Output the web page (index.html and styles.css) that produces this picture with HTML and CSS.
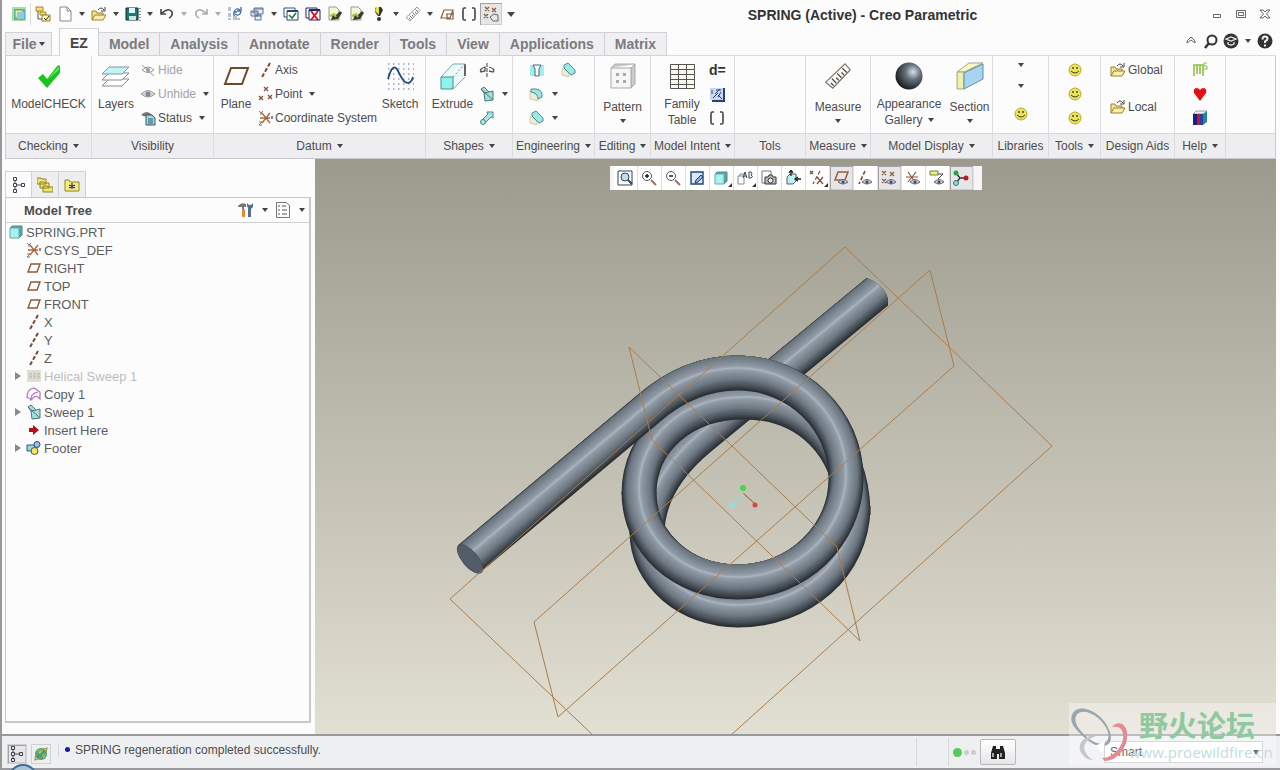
FILE: index.html
```
<!DOCTYPE html>
<html lang="en">
<head>
    <meta charset="UTF-8">
    <meta name="viewport" content="width=device-width, initial-scale=1.0">
    <title>SPRING (Active) - Creo Parametric</title>
    <link rel="stylesheet" href="styles.css">
</head>
<body>
    <!-- Shared icons -->
    <svg class="sprite" aria-hidden="true">
        <symbol id="i-plane" viewBox="0 0 16 16"><path d="M5 4h9l-3 8H2z" fill="none" stroke="#8a5a38" stroke-width="1.4"/></symbol>
        <symbol id="i-axis" viewBox="0 0 16 16"><path d="M12 1L4 15" fill="none" stroke="#7a4c30" stroke-width="2" stroke-dasharray="4 2"/></symbol>
        <symbol id="i-csys" viewBox="0 0 16 16"><path d="M2 8h10M4 3l8 10M12 3L4 13" stroke="#a5663a" stroke-width="1.3"/><path d="M1 1l2 2 2-2M3 3v2M13 6l2 3M15 6l-2 3M1 12h3l-3 3h3" fill="none" stroke="#555" stroke-width=".8"/></symbol>
        <symbol id="i-points" viewBox="0 0 16 16"><path d="M6 1l4 4M10 1L6 5M1 10l4 4M5 10l-4 4M10 9l4 4M14 9l-4 4" stroke="#8a5038" stroke-width="1.3"/></symbol>
        <symbol id="i-sweep" viewBox="0 0 16 16"><path d="M2 3l3-2 5 5 4-1v9l-8 1-1-8z" fill="#a9dcdc" stroke="#447878"/><path d="M2 3l12 11M5 7l5-1" stroke="#447878" fill="none"/></symbol>
        <symbol id="i-open" viewBox="0 0 16 16"><path d="M1 14V5h4l1 2h6v3" fill="#f4e08a" stroke="#9a8132"/><path d="M1 14l3-5h11l-3 5z" fill="#fbeeaa" stroke="#9a8132"/><path d="M7 4q3-4 6 0M14 1v4h-4" fill="none" stroke="#444"/></symbol>
        <symbol id="i-smile" viewBox="0 0 16 16"><circle cx="8" cy="8" r="6" fill="#ece458" stroke="#b5a93a"/><path d="M6 5v2M10 5v2" stroke="#443f10" stroke-width="1.4"/><path d="M4 9q4 4 8 0" fill="none" stroke="#443f10"/></symbol>
        <symbol id="i-round" viewBox="0 0 16 16"><path d="M1 5v8l8 2V9z" fill="#f2e9d2" stroke="#c9bc9a" stroke-width=".7"/><path d="M2 3h5q7 1 6 8l-4 2q0-6-7-7z" fill="#9ce8e4" stroke="#4c8c8c"/></symbol>
        <symbol id="i-chamfer" viewBox="0 0 16 16"><path d="M1 6v7l7 2v-4z" fill="#f2e9d2" stroke="#c9bc9a" stroke-width=".7"/><path d="M3 3l4-2 7 7v3l-4 2-7-7z" fill="#9ce8e4" stroke="#4c8c8c"/></symbol>
        <symbol id="i-tree" viewBox="0 0 16 16"><path d="M2.500 .500h3v3h-3zM2.500 6.500h3v3h-3zM2.500 12.500h3v3h-3zM10.500 6.500h3v3h-3zM4 3.500v3M4 9.500v3M5.500 8h5" fill="none" stroke="#3c4454"/></symbol>
        <symbol id="i-eye" viewBox="0 0 16 16"><path d="M1 8q7-7 14 0q-7 6-14 0z" fill="#d4d6d8" stroke="#999"/><circle cx="8" cy="8" r="2.500" fill="#888"/></symbol>
        <symbol id="i-ruler" viewBox="0 0 32 32"><path d="M2 23L24 2l6 7L10 30z" fill="#f8f6ee" stroke="#776f66" stroke-width="1.300"/><path d="M11 27l-3-3M14 24l-5-5M17 21l-3-3M20 18l-5-5M23 15l-3-3M26 12l-5-5" stroke="#444" stroke-width="1.4"/></symbol>
        <symbol id="i-edit" viewBox="0 0 16 16"><path d="M2 1h7l3 3v10H2z" fill="#f4f6d4" stroke="#999"/><path d="M4 14l2-6 3 1 4-4 2 2-4 6z" fill="#3a3d30"/><path d="M3 10l4-2 2 3" stroke="#b4c04a" stroke-width="2" fill="none"/></symbol>
        <symbol id="i-cube" viewBox="0 0 16 16"><path d="M2 4l2-2h10v9l-3 3" fill="#4fa8aa" stroke="#5a8888"/><path d="M2 4h9v10H2z" fill="#a6f3ef" stroke="#6aa"/></symbol>
        <symbol id="i-brackets" viewBox="0 0 16 16"><path d="M5 2H3Q2 2 2 4v8q0 2 1 2h2M11 2h2q1 0 1 2v8q0 2-1 2h-2" fill="none" stroke="#444" stroke-width="1.6"/></symbol>
    </svg>

    <div class="app">
        <header class="titlebar">
            <div class="quick">
                <button aria-label="Creo"><svg viewBox="0 0 16 16"><path d="M1 1h14v14H1z" fill="#a7dfa0"/><path d="M3 3h11v11H3z" fill="#56b5c0"/><path d="M4 4h8v8H4z" fill="#e9ec92" stroke="#61a86c"/><path d="M6 6h7v7H6z" fill="#8fc9dd"/></svg></button>
                <span class="sep"></span>
                <button aria-label="Model tree"><svg viewBox="0 0 16 16"><path d="M1 1h7v4H1zM5 6h6v3H5z" fill="#f4df70" stroke="#a48a28"/><path d="M3 5v8h4" fill="none" stroke="#555"/><path d="M7 9h8v6H7z" fill="#fff4a8" stroke="#8f7a2a"/><path d="M9 12l2 2 3-4" fill="none" stroke="#333"/></svg></button>
                <button aria-label="New"><svg viewBox="0 0 16 16"><path d="M3 1h7l4 4v10H3zM10 1v4h4" fill="#fff" stroke="#888"/></svg></button>
                <button class="drop" aria-label="New options"></button>
                <button aria-label="Open"><svg><use href="#i-open"/></svg></button>
                <button class="drop" aria-label="Open options"></button>
                <button aria-label="Save"><svg viewBox="0 0 16 16"><path d="M1 2h12v12H1z" fill="#1d7a78" stroke="#123"/><path d="M4 2h6v5H4z" fill="#e8f6f4"/><path d="M4 10h7v4H4z" fill="#cfe6e2"/><path d="M15 2v13" stroke="#333" stroke-dasharray="1 2"/></svg></button>
                <button class="drop" aria-label="Save options"></button>
                <button aria-label="Undo"><svg viewBox="0 0 16 16"><path d="M3 7q7-6 10-1q1 4-3 6M2 3v5h5" fill="none" stroke="#444" stroke-width="1.600"/></svg></button>
                <button class="drop off" aria-label="Undo options"></button>
                <button aria-label="Redo"><svg viewBox="0 0 16 16"><path d="M13 7q-7-6-10-1q-1 4 3 6M14 3v5H9" fill="none" stroke="#aaa" stroke-width="1.600"/></svg></button>
                <button class="drop off" aria-label="Redo options"></button>
                <button aria-label="Regenerate"><svg viewBox="0 0 16 16"><path d="M1 2h3M1 4h3M1 8h3M1 10h3M1 13h3M6 13h7M6 11h4" stroke="#789" stroke-width="1.200"/><path d="M7 6q2-5 6-2M14 1v4h-4M14 6q-2 5-6 2M7 10V6h3" fill="none" stroke="#3a6ea8" stroke-width="1.300"/></svg></button>
                <button aria-label="Windows"><svg viewBox="0 0 16 16"><path d="M5 2h9v6H5zM2 5h7v5H2zM6 9h6v5H6z" fill="#e8f0fa" stroke="#5b7396"/><path d="M5 3h9M2 6h7M6 10h6" stroke="#5b7396"/></svg></button>
                <button class="drop" aria-label="Window options"></button>
                <button aria-label="Activate"><svg viewBox="0 0 16 16"><path d="M1 2h11v9H1z" fill="#fff" stroke="#356"/><path d="M4 5h11v9H4z" fill="#fff" stroke="#27466c"/><path d="M4 5h11" stroke="#27466c" stroke-width="2"/><path d="M6 9l3 3 4-5" fill="none" stroke="#1f7a3d" stroke-width="1.600"/></svg></button>
                <button aria-label="Close window"><svg viewBox="0 0 16 16"><path d="M1 2h11v10H1z" fill="#fff" stroke="#24246a"/><path d="M4 4h11v10H4z" fill="#fff" stroke="#24246a"/><path d="M4 4h11" stroke="#24246a" stroke-width="2"/><path d="M6 5l7 9M13 5l-7 9" stroke="#d9151f" stroke-width="2"/></svg></button>
                <button aria-label="Edit sketch"><svg><use href="#i-edit"/></svg></button>
                <button aria-label="Edit dimensions"><svg><use href="#i-edit"/></svg></button>
                <button aria-label="Alert"><svg viewBox="0 0 16 16"><path d="M5 1h5l2 3-3 6H7L4 6V3z" fill="#333"/><path d="M5 1h3v8L4 5z" fill="#e6e52a"/><circle cx="8" cy="13" r="2" fill="#333"/></svg></button>
                <button class="drop" aria-label="Alert options"></button>
                <button aria-label="Measure"><svg><use href="#i-ruler"/></svg></button>
                <button class="drop" aria-label="Measure options"></button>
                <button aria-label="Sketch plane"><svg viewBox="0 0 16 16"><path d="M5 4h9l-3 8H2zM7 8h8M8 8v5h6V5" fill="none" stroke="#8a5a48" stroke-width="1.200"/></svg></button>
                <button aria-label="Parameters"><svg><use href="#i-brackets"/></svg></button>
                <button class="pressed" aria-label="Point display"><svg viewBox="0 0 16 16"><path d="M2 1l4 4M6 1L2 5M9 2l4 4M13 2L9 6M1 8l4 4M5 8l-4 4" stroke="#87603c" stroke-width="1.300"/><path d="M7 11l4-3 4 1v6h-5z" fill="#e6e6e6" stroke="#666"/></svg></button>
                <button class="drop customize" aria-label="Customize toolbar"></button>
            </div>
            <h1>SPRING (Active) - Creo Parametric</h1>
            <div class="window-buttons">
                <button aria-label="Minimize"><svg viewBox="0 0 16 16"><path d="M4.500 8.500h7v3h-7z" fill="none" stroke="#666"/></svg></button>
                <button aria-label="Restore"><svg viewBox="0 0 16 16"><path d="M3.500 4.500h9v7h-9zM5.500 6.500h5v3h-5z" fill="none" stroke="#666"/></svg></button>
                <button aria-label="Close"><svg viewBox="0 0 16 16"><path d="M3 4h3l2 2 2-2h3L9.500 8l3.500 4h-3l-2-2-2 2H3l3.500-4z" fill="#fff" stroke="#666"/></svg></button>
            </div>
        </header>

        <nav class="tabs">
            <button class="tab file">File<i class="caret"></i></button>
            <button class="tab active">EZ</button>
            <button class="tab">Model</button>
            <button class="tab">Analysis</button>
            <button class="tab">Annotate</button>
            <button class="tab">Render</button>
            <button class="tab">Tools</button>
            <button class="tab">View</button>
            <button class="tab">Applications</button>
            <button class="tab">Matrix</button>
            <div class="help-buttons">
                <button aria-label="Collapse ribbon"><svg viewBox="0 0 16 16"><path d="M4 8l4-4 4 4v2L8 7l-4 3z" fill="none" stroke="#666"/></svg></button>
                <button aria-label="Search"><svg viewBox="0 0 16 16"><circle cx="9" cy="7" r="4.500" fill="none" stroke="#333" stroke-width="2"/><path d="M6 10l-4 5" stroke="#333" stroke-width="2.500"/></svg></button>
                <button class="learn" aria-label="Learning"><svg viewBox="0 0 16 16"><circle cx="8" cy="8" r="7.500" fill="#333"/><path d="M3 6l5-2 5 2-5 2zM5 9v2q3 2 6 0V9" fill="none" stroke="#eee" stroke-width="1.300"/></svg></button>
                <button class="drop" aria-label="Learning options"></button>
                <button aria-label="Help"><svg viewBox="0 0 16 16"><circle cx="8" cy="8" r="7.500" fill="#333"/><path d="M5.500 6.500q0-3 2.500-3t2.500 2.300q0 1.400-2.500 2.700v1.500" fill="none" stroke="#eee" stroke-width="2"/><path d="M7 11.500h2v2H7z" fill="#eee"/></svg></button>
            </div>
        </nav>

        <section class="ribbon">
            <div class="group checking">
                <div class="group-body">
                    <button class="big"><svg viewBox="0 0 28 28"><path d="M3 16l5-4 4 5L23 3l2 1v7L12 26z" fill="#19c41f"/><path d="M12 18L24 4v4z" fill="#5ce45a"/></svg>ModelCHECK</button>
                </div>
                <button class="group-name">Checking<i class="caret"></i></button>
            </div>
            <div class="group visibility">
                <div class="group-body">
                    <button class="big layers"><svg viewBox="0 0 28 28"><path d="M7 17h20l-7 7H0z" fill="#fff" stroke="#8b8b8b"/><path d="M7 11h20l-7 7H0z" fill="#fff" stroke="#8b8b8b"/><path d="M7 5h20l-7 7H0z" fill="#c4f4f6" stroke="#7a9ca0"/></svg>Layers</button>
                    <div class="stack">
                        <button class="small" disabled><svg viewBox="0 0 16 16"><path d="M2 8q6-6 12 0q-6 5-12 0zM2 3l12 11" fill="none" stroke="#999"/><circle cx="8" cy="8" r="2" fill="#999"/></svg>Hide</button>
                        <button class="small" disabled><svg><use href="#i-eye"/></svg>Unhide<i class="caret"></i></button>
                        <button class="small"><svg viewBox="0 0 16 16"><path d="M1 5q6-6 11 0q-5 3-11 0z" fill="#777"/><path d="M6 5h6l3 3v7H6z" fill="#9fdede" stroke="#356"/><path d="M8 9h5M8 11h5M8 13h5" stroke="#356"/></svg>Status<i class="caret"></i></button>
                    </div>
                </div>
                <div class="group-name">Visibility</div>
            </div>
            <div class="group datum">
                <div class="group-body">
                    <button class="big plane"><svg viewBox="0 0 28 28"><path d="M9 6h17l-6 16H3z" fill="none" stroke="#6a4a28" stroke-width="2"/></svg>Plane</button>
                    <div class="stack wide">
                        <button class="small"><svg><use href="#i-axis"/></svg>Axis</button>
                        <button class="small"><svg><use href="#i-points"/></svg>Point<i class="caret"></i></button>
                        <button class="small"><svg><use href="#i-csys"/></svg>Coordinate System</button>
                    </div>
                    <button class="big sketch"><svg viewBox="0 0 28 28"><path d="M2 2h26M2 7h26M2 12h26M2 17h26M2 22h26M2 27h26" stroke="#8d9fc4" stroke-width="1.500" stroke-dasharray="1.500 3.500"/><path d="M2 17Q7-1 12 9t7 11q6 3 8-5" fill="none" stroke="#2b4a78" stroke-width="1.800"/></svg>Sketch</button>
                </div>
                <button class="group-name">Datum<i class="caret"></i></button>
            </div>
            <div class="group shapes">
                <div class="group-body">
                    <button class="big extrude"><svg viewBox="0 0 28 28"><path d="M2 15L14 2h12v12L14 27z" fill="#eefafa"/><path d="M2 15L14 2h12M14 27l12-12" fill="none" stroke="#7aa"/><path d="M26 2v12" stroke="#333" stroke-width="1.500"/><path d="M14 15L26 2" stroke="#789" stroke-dasharray="2 2"/><path d="M2 15h12v12H2z" fill="#8df3ee" stroke="#4a8c8c"/></svg>Extrude</button>
                    <div class="stack">
                        <button class="small" aria-label="Revolve"><svg viewBox="0 0 16 16"><path d="M8 1v14" stroke="#444" stroke-dasharray="4 1"/><path d="M6 5Q0 7 2 10l4-1zM10 5q7 2 4 5l-4-1" fill="none" stroke="#555" stroke-width="1.300"/></svg></button>
                        <button class="small" aria-label="Sweep"><svg><use href="#i-sweep"/></svg><i class="caret"></i></button>
                        <button class="small" aria-label="Swept blend"><svg viewBox="0 0 16 16"><path d="M3 10l6-6-1-2h6v6l-2-1-6 6z" fill="#a9e8e8" stroke="#4a8484"/><circle cx="4" cy="12" r="2.500" fill="#a9e8e8" stroke="#4a8484"/></svg></button>
                    </div>
                </div>
                <button class="group-name">Shapes<i class="caret"></i></button>
            </div>
            <div class="group engineering">
                <div class="group-body">
                    <div class="stack">
                        <button class="small" aria-label="Hole"><svg viewBox="0 0 16 16"><path d="M1 3h14v11H1z" fill="#a2eeec"/><path d="M4 3h8l-2 4v7H6V7z" fill="#fff" stroke="#467"/></svg></button>
                        <button class="small" aria-label="Round"><svg><use href="#i-round"/></svg><i class="caret"></i></button>
                        <button class="small" aria-label="Chamfer"><svg><use href="#i-chamfer"/></svg><i class="caret"></i></button>
                    </div>
                    <div class="stack">
                        <button class="small" aria-label="Draft"><svg><use href="#i-chamfer"/></svg></button>
                    </div>
                </div>
                <button class="group-name">Engineering<i class="caret"></i></button>
            </div>
            <div class="group editing">
                <div class="group-body">
                    <button class="big menu"><svg viewBox="0 0 28 28"><path d="M2 6l4-4h20l-4 4v20l4-4V2" fill="#ccc" stroke="#aaa"/><path d="M2 6h20v20H2z" fill="#f6f6f6" stroke="#aaa"/><path d="M7 11h3v3H7zM14 11h3v3h-3zM7 18h3v3H7zM14 18h3v3h-3z" fill="#aaa"/></svg>Pattern<i class="caret"></i></button>
                </div>
                <button class="group-name">Editing<i class="caret"></i></button>
            </div>
            <div class="group intent">
                <div class="group-body">
                    <button class="big family"><svg viewBox="0 0 28 28"><path d="M2.500 2.500h24v24h-24zM2.500 7.500h24M2.500 12.500h24M2.500 17.500h24M2.500 22.500h24M10.500 2.500v24M18.500 2.500v24" fill="#fbf8ee" stroke="#555"/></svg>Family<br>Table</button>
                    <div class="stack">
                        <button class="small relations">d=</button>
                        <button class="small" aria-label="Publish geometry"><svg viewBox="0 0 16 16"><path d="M1 2h13v12H1z" fill="#c9d8ee"/><path d="M15 2v13H3" fill="none" stroke="#24427c" stroke-width="2"/><path d="M3 4v4M6 8l5-5M7 4h5M4 12l5-5M9 9l4 4M12 6l-3 5" stroke="#24427c"/></svg></button>
                        <button class="small" aria-label="Parameters"><svg><use href="#i-brackets"/></svg></button>
                    </div>
                </div>
                <button class="group-name">Model Intent<i class="caret"></i></button>
            </div>
            <div class="group tols">
                <div class="group-body"></div>
                <div class="group-name">Tols</div>
            </div>
            <div class="group measure">
                <div class="group-body">
                    <button class="big menu"><svg><use href="#i-ruler"/></svg>Measure<i class="caret"></i></button>
                </div>
                <button class="group-name">Measure<i class="caret"></i></button>
            </div>
            <div class="group display">
                <div class="group-body">
                    <button class="big appearance"><svg viewBox="0 0 28 28"><defs><radialGradient id="ball" cx=".65" cy=".35" r=".7"><stop offset="0" stop-color="#d7e2ea"/><stop offset=".4" stop-color="#66727c"/><stop offset="1" stop-color="#15181b"/></radialGradient></defs><circle cx="14" cy="14" r="13.500" fill="url(#ball)"/></svg><span>Appearance<br>Gallery<i class="caret"></i></span></button>
                    <button class="big menu section"><svg viewBox="0 0 28 28"><path d="M1 10L13 1h14L8 10z" fill="#fbf7c4" stroke="#aaa47a"/><path d="M1 10h7v17H1z" fill="#f0efb0" stroke="#aaa47a"/><path d="M8 11L27 2v15L8 27z" fill="#a8d4ef" stroke="#5e8fac"/></svg>Section<i class="caret"></i></button>
                </div>
                <button class="group-name">Model Display<i class="caret"></i></button>
            </div>
            <div class="group libraries">
                <div class="group-body">
                    <div class="stack center">
                        <button class="small tight" aria-label="Library 1"><i class="caret"></i></button>
                        <button class="small" aria-label="Library 2"><i class="caret"></i></button>
                        <button class="small" aria-label="Library 3"><svg><use href="#i-smile"/></svg></button>
                    </div>
                </div>
                <div class="group-name">Libraries</div>
            </div>
            <div class="group tools">
                <div class="group-body">
                    <div class="stack center">
                        <button class="small" aria-label="Tool 1"><svg><use href="#i-smile"/></svg></button>
                        <button class="small" aria-label="Tool 2"><svg><use href="#i-smile"/></svg></button>
                        <button class="small" aria-label="Tool 3"><svg><use href="#i-smile"/></svg></button>
                    </div>
                </div>
                <button class="group-name">Tools<i class="caret"></i></button>
            </div>
            <div class="group aids">
                <div class="group-body">
                    <div class="stack spread">
                        <button class="small"><svg><use href="#i-open"/></svg>Global</button>
                        <button class="small"><svg><use href="#i-open"/></svg>Local</button>
                    </div>
                </div>
                <div class="group-name">Design Aids</div>
            </div>
            <div class="group help">
                <div class="group-body">
                    <div class="stack center">
                        <button class="small" aria-label="Model help"><svg viewBox="0 0 16 16"><path d="M2 14V3h9v11M5 3v9M8 3v9" fill="none" stroke="#8fbd4a" stroke-width="1.600"/><path d="M15 1h-3v3h3v3h-3" fill="none" stroke="#8fbd4a"/></svg></button>
                        <button class="small" aria-label="Favourites"><svg viewBox="0 0 16 16"><path d="M8 15L2 7q-1-4 2-5 3 0 4 2 1-2 4-2 3 1 2 5z" fill="#e50f12"/></svg></button>
                        <button class="small" aria-label="Books"><svg viewBox="0 0 16 16"><path d="M1 4l3-3h11l-3 3z" fill="#eee" stroke="#667" stroke-width=".6"/><path d="M1 4h4v11H1z" fill="#1c1c86"/><path d="M5 4h3v11H5z" fill="#c01825"/><path d="M8 4h3v11H8z" fill="#2a3fa0"/><path d="M11 4l4-3v11l-4 3z" fill="#1f8a8a"/></svg></button>
                    </div>
                </div>
                <button class="group-name">Help<i class="caret"></i></button>
            </div>
            <div class="group rest">
                <div class="group-body"></div>
                <div class="group-name"></div>
            </div>
        </section>

        <main class="work">
            <aside class="navigator">
                <div class="nav-tabs">
                    <button class="active" aria-label="Model tree"><svg><use href="#i-tree"/></svg></button>
                    <button aria-label="Folder browser"><svg viewBox="0 0 16 16"><path d="M0 1h4l1 1h4v5H0zM3 5h4l1 1h4v5H3zM6 9h4l1 1h5v5H6z" fill="#f2e667" stroke="#8c8232"/></svg></button>
                    <button aria-label="Favorites"><svg viewBox="0 0 16 16"><path d="M1 3h4l1 2h9v9H1z" fill="#f6ec76" stroke="#8c8232"/><path d="M8 6v6M5 8l6 3M11 8l-6 3" stroke="#2b2f9c" stroke-width="1.300"/></svg></button>
                </div>
                <div class="tree">
                    <div class="tree-head">
                        <h2>Model Tree</h2>
                        <button aria-label="Settings"><svg viewBox="0 0 16 16"><path d="M0 4q3-4 8-2v3H6v10H4V5H0z" fill="#777"/><path d="M4 7h3v8H4z" fill="#e08a3a"/><path d="M9 1l2 2h2l2-2v4l-2 2v8h-3V6L9 4z" fill="#4f6f94"/></svg></button>
                        <button class="drop" aria-label="Settings options"></button>
                        <button aria-label="Show"><svg viewBox="0 0 16 16"><path d="M1.500.500h10l3 3v12h-13z" fill="#fafafa" stroke="#777"/><path d="M3 4h2M7 4h4M3 8h2M7 8h5M3 12h2M7 12h5" stroke="#555"/></svg></button>
                        <button class="drop" aria-label="Show options"></button>
                    </div>
                    <ul>
                        <li class="root"><svg><use href="#i-cube"/></svg>SPRING.PRT</li>
                        <li><i></i><svg><use href="#i-csys"/></svg>CSYS_DEF</li>
                        <li><i></i><svg><use href="#i-plane"/></svg>RIGHT</li>
                        <li><i></i><svg><use href="#i-plane"/></svg>TOP</li>
                        <li><i></i><svg><use href="#i-plane"/></svg>FRONT</li>
                        <li><i></i><svg><use href="#i-axis"/></svg>X</li>
                        <li><i></i><svg><use href="#i-axis"/></svg>Y</li>
                        <li><i></i><svg><use href="#i-axis"/></svg>Z</li>
                        <li class="suppressed"><i class="expand"></i><svg viewBox="0 0 16 16"><path d="M1 2h14v12H1z" fill="#deded4"/><path d="M3 5l3 1-3 2 3 1-3 2M7 5l3 1-3 2 3 1-3 2M11 5l3 1-3 2 3 1-3 2" fill="none" stroke="#bfbfb2"/></svg>Helical Sweep 1</li>
                        <li><i></i><svg viewBox="0 0 16 16"><path d="M1 12Q1 3 8 2l6 4v7q-3-4-6-2l-3 3q-1-6 7-8M1 12q2-1 4 2" fill="none" stroke="#b072c4" stroke-width="1.200"/></svg>Copy 1</li>
                        <li><i class="expand"></i><svg><use href="#i-sweep"/></svg>Sweep 1</li>
                        <li><i></i><svg viewBox="0 0 16 16"><path d="M3 6h4V3l6 5-6 5v-3H3z" fill="#b4101c"/></svg>Insert Here</li>
                        <li><i class="expand"></i><svg viewBox="0 0 16 16"><path d="M1 5h8v6H1z" fill="#8fdede" stroke="#356"/><circle cx="11" cy="4.500" r="3" fill="#9fc0ee" stroke="#346"/><circle cx="8.500" cy="11" r="3.500" fill="#f2e667" stroke="#554"/></svg>Footer</li>
                    </ul>
                </div>
            </aside>

            <div class="viewport">
                <svg class="scene" viewBox="315 159 961 575" preserveAspectRatio="xMidYMid slice">
                    <defs>
                        <path id="rod" d="M900 273L700 438C665 467 647 500 647 534"/>
                        <path id="coil-mid" d="M853 515C853 445 806 402 744 402C684 402 639 440 639 494"/>
                        <path id="coil-low" d="M647 532C647 575 688 610 738 610C802 610 853 566 853 506"/>
                        <path id="coil-front" d="M639 492C639 543 682 582 738 582C797 582 846 536 846 478C846 420 797 373 738 373C702 373 672 388 648 409L469 559"/>
                        <clipPath id="rod-end"><path d="M600 230L866 278C878 282 888 292 888 302V660H600Z"/></clipPath>
                    </defs>
                    <!-- tubes, far to near -->
                    <g clip-path="url(#rod-end)"><g class="tube" data-path="rod"></g></g>
                    <g class="tube" data-path="coil-mid"></g>
                    <g class="tube" data-path="coil-low"></g>
                    <g class="tube" data-path="coil-front"></g>
                    <ellipse cx="470" cy="559" rx="17.500" ry="7.500" transform="rotate(50 470 559)" fill="#535d67" stroke="#48515a"/>
                    <!-- datum planes -->
                    <g class="datums">
                        <path d="M845 247L1052 446L660 799L450 599Z"/>
                        <path d="M930 270L954 366L558 717L534 622Z"/>
                        <path d="M629 347L837 547L860 641L652 440Z"/>
                    </g>
                    <!-- spin centre -->
                    <path d="M743 493L755 504" stroke="#a33f3f"/>
                    <path d="M743 495L732 506" stroke="#a8d4ce" stroke-width="2"/>
                    <path d="M743 489v12" stroke="#a8d8b0"/>
                    <circle cx="743" cy="488" r="3" fill="#4cd24c"/>
                    <circle cx="755" cy="505" r="2.500" fill="#d94444"/>
                    <circle cx="732" cy="505" r="3" fill="#9bd9d6"/>
                </svg>

                <div class="view-tools">
                    <button aria-label="Refit"><svg viewBox="0 0 16 16"><path d="M1 1h14v14H1z" fill="#fff" stroke="#345"/><circle cx="8" cy="7" r="4" fill="#c4dcf2" stroke="#345"/><path d="M11 10l4 4" stroke="#345" stroke-width="2"/></svg></button>
                    <button aria-label="Zoom in"><svg viewBox="0 0 16 16"><circle cx="6" cy="6" r="4.500" fill="#fff" stroke="#555"/><path d="M4 6h4M6 4v4" stroke="#222" stroke-width="1.500"/><path d="M10 10l5 5" stroke="#a07060" stroke-width="2"/></svg></button>
                    <button aria-label="Zoom out"><svg viewBox="0 0 16 16"><circle cx="6" cy="6" r="4.500" fill="#fff" stroke="#555"/><path d="M4 6h4" stroke="#222" stroke-width="1.500"/><path d="M10 10l5 5" stroke="#a07060" stroke-width="2"/></svg></button>
                    <button aria-label="Repaint"><svg viewBox="0 0 16 16"><path d="M2 2h12v12H2z" fill="#d6e9fa" stroke="#24446c" stroke-width="1.400"/><path d="M12 5l-5 5-1 3 3-1 5-5z" fill="#8fb0da" stroke="#24446c"/></svg></button>
                    <button class="more" aria-label="Display style"><svg><use href="#i-cube"/></svg></button>
                    <button class="more" aria-label="Saved views"><svg viewBox="0 0 16 16"><path d="M1 6h6v8H1zM3 6V4h4" fill="#fff" stroke="#888"/><path d="M6 8l2-6 2 6M7 6h2M12 2v6h2q3-2 0-3 2-2 0-3z" fill="none" stroke="#345"/></svg></button>
                    <button aria-label="View manager"><svg viewBox="0 0 16 16"><path d="M1 1h9v12H1z" fill="#fff" stroke="#777"/><path d="M4 7h3l1-2h3l1 2h3v7H4z" fill="#bbb" stroke="#333"/><circle cx="9.500" cy="10.500" r="2.500" fill="#eee" stroke="#333"/></svg></button>
                    <button aria-label="Perspective"><svg viewBox="0 0 16 16"><path d="M2 7l3-3h6v7l-3 3H2z" fill="#bfeef0" stroke="#466"/><path d="M6 0v6M4 3l2-3 2 3M16 9h-5M13 7l-3 2 3 2" fill="none" stroke="#222" stroke-width="1.300"/></svg></button>
                    <button class="more" aria-label="Datum filters"><svg viewBox="0 0 16 16"><path d="M1 1l3 3M4 1L1 4M8 7l6 7M14 7l-6 7" stroke="#7a5236" stroke-width="1.300"/><path d="M11 1L4 14" stroke="#7a5236" stroke-width="1.300" stroke-dasharray="4 2"/></svg></button>
                    <button class="pressed" aria-label="Plane display"><svg viewBox="0 0 16 16"><path d="M5 2h10l-3 8H2z" fill="none" stroke="#9a6038" stroke-width="1.500"/><path d="M5 12q5-5 10 0q-5 4-10 0z" fill="#c4ccd2" stroke="#667"/><circle cx="10" cy="12" r="1.500" fill="#445"/></svg></button>
                    <button aria-label="Axis display"><svg viewBox="0 0 16 16"><path d="M8 1L2 14" stroke="#7a4c30" stroke-width="1.600" stroke-dasharray="4 2"/><path d="M5 12q5-5 10 0q-5 4-10 0z" fill="#c4ccd2" stroke="#667"/><circle cx="10" cy="12" r="1.500" fill="#445"/></svg></button>
                    <button class="pressed" aria-label="Point display"><svg viewBox="0 0 16 16"><path d="M1 1l4 4M5 1L1 5M9 2l4 4M13 2L9 6M1 9l4 4M5 9l-4 4" stroke="#87603c" stroke-width="1.300"/><path d="M5 12q5-5 10 0q-5 4-10 0z" fill="#c4ccd2" stroke="#667"/><circle cx="10" cy="12" r="1.500" fill="#445"/></svg></button>
                    <button aria-label="Csys display"><svg viewBox="0 0 16 16"><path d="M1 7h12M3 2l7 10M11 2L3 12" stroke="#8a5a3a" stroke-width="1.200"/><path d="M5 12q5-5 10 0q-5 4-10 0z" fill="#c4ccd2" stroke="#667"/><circle cx="10" cy="12" r="1.500" fill="#445"/></svg></button>
                    <button aria-label="Annotation display"><svg viewBox="0 0 16 16"><path d="M1 1h8v4H1z" fill="#f4f070" stroke="#776"/><path d="M9 4h5l-5 5" fill="none" stroke="#444"/><path d="M5 12q5-5 10 0q-5 4-10 0z" fill="#c4ccd2" stroke="#667"/><circle cx="10" cy="12" r="1.500" fill="#445"/></svg></button>
                    <button class="pressed" aria-label="Spin center"><svg viewBox="0 0 16 16"><path d="M3 3l4 5-4 5M7 8h6" fill="none" stroke="#333" stroke-width="1.300"/><circle cx="3" cy="3" r="2.500" fill="#24a348"/><circle cx="3" cy="13" r="2.500" fill="#8fe0c8" stroke="#377"/><circle cx="13" cy="8" r="2.500" fill="#c01a24"/></svg></button>
                </div>
            </div>
        </main>

        <footer class="statusbar">
            <button class="pressed" aria-label="Navigator"><svg><use href="#i-tree"/></svg></button>
            <button aria-label="Browser"><svg viewBox="0 0 16 16"><circle cx="8" cy="8" r="6" fill="#38a08c"/><path d="M4 5q3-3 6-1l-3 4zM9 9l4-2-2 6z" fill="#b7d24e"/><path d="M2 14Q2 4 14 2Q14 11 2 14z" fill="none" stroke="#a8963a" stroke-width="1.200"/></svg></button>
            <p class="message">SPRING regeneration completed successfully.</p>
            <div class="cell"></div>
            <div class="cell lights"><b></b><i></i><i></i></div>
            <button class="find" aria-label="Find"><svg viewBox="0 0 16 16"><path d="M3 2h3v3h4V2h3l2 7v6H9v-5H7v5H1V9z" fill="#222"/><path d="M3 9v4M11 9v4" stroke="#eee" stroke-width="1.300"/></svg></button>
            <div class="filter">
                <select aria-label="Selection filter"><option>Smart</option></select>
            </div>
        </footer>

        <div class="start-orb"></div>
        <div class="watermark">
            <svg viewBox="0 0 60 60">
                <path d="M3 12C8-2 34 8 41 29C46 45 30 48 16 35C7 27 0 20 3 12ZM7 13C4 20 11 28 19 35C30 44 42 42 39 29C33 12 12 3 7 13Z" fill="#9aa5ac" fill-rule="evenodd"/>
                <path d="M43 24C48 18 56 19 58 29C60 43 49 58 36 58L33 55C45 55 56 41 54 31C53 24 48 23 43 24Z" fill="#e28b94"/>
                <path d="M27 33C17 31 9 39 11 47C13 53 18 57 24 57C16 52 14 45 16 41C18 37 22 35 27 33Z" fill="#c3c8ce"/>
                <path d="M26 43l10-5-2 12z" fill="#fff"/>
            </svg>
            <div>
                <strong>野火论坛</strong>
                <span>www.proewildfire.cn</span>
            </div>
        </div>
    </div>

    <script>
        // Shade each tube as a pile of strokes that get narrower, lighter
        // and shift up towards the light
        const SVG = 'http://www.w3.org/2000/svg';
        const TUBE = 35;
        const LAYERS = 24;
        const SHIFT = 5;
        const stops = [
            [0, [42, 47, 52]],
            [0.12, [70, 78, 86]],
            [0.3, [106, 116, 126]],
            [0.6, [128, 138, 149]],
            [0.85, [144, 155, 166]],
            [1, [170, 181, 192]]
        ];

        function shade(t) {
            const i = stops.findIndex((s, n) => n > 0 && t <= s[0]);
            const [t0, a] = stops[i - 1];
            const [t1, b] = stops[i];
            const k = (t - t0) / (t1 - t0);
            return 'rgb(' + a.map((v, n) => Math.round(v + (b[n] - v) * k)).join(',') + ')';
        }

        document.querySelectorAll('.tube').forEach(tube => {
            for (let i = 0; i < LAYERS; i++) {
                const t = i / (LAYERS - 1);
                const use = document.createElementNS(SVG, 'use');
                use.setAttribute('href', '#' + tube.dataset.path);
                use.setAttribute('y', -Math.min(TUBE / 2 * t, SHIFT));
                use.setAttribute('stroke', shade(t));
                use.setAttribute('stroke-width', Math.max(TUBE * (1 - t), 1));
                tube.appendChild(use);
            }
        });
    </script>
</body>
</html>
```
FILE: styles.css
```
* {
    box-sizing: border-box;
}

body {
    margin: 0;
    font-family: "Liberation Sans", Arial, sans-serif;
    font-size: 12px;
    color: #4c4c4e;
    background: #fcfcfd;
}

button {
    font: inherit;
    color: inherit;
    background: none;
    border: 0;
    padding: 0;
    display: flex;
    align-items: center;
    justify-content: center;
}

svg {
    width: 16px;
    height: 16px;
    flex: none;
}

.sprite {
    position: absolute;
    width: 0;
    height: 0;
}

.app {
    position: relative;
    min-height: 100vh;
    display: flex;
    flex-direction: column;
    border-left: 2px solid #98989c;
    overflow: hidden;
}

.caret,
.drop::after {
    content: "";
    display: inline-block;
    border: 3px solid transparent;
    border-top: 4px solid #444;
    border-bottom: 0;
}

/* title bar */
.titlebar {
    display: flex;
    align-items: center;
    height: 28px;
    padding-right: 3px;
}

.quick {
    display: flex;
    align-items: center;
    padding-left: 6px;
}

.quick button {
    width: 22px;
    height: 22px;
}

.quick .drop {
    width: 12px;
}

.quick .customize {
    width: 18px;
}

.customize::after {
    border-width: 5px 4px 0;
}

.drop.off::after {
    border-top-color: #aaa;
}

.sep {
    width: 1px;
    height: 22px;
    margin-right: 1px;
    background: #dcdcdc;
}

.pressed {
    background: #e6e6e8;
    box-shadow: inset 1px 1px 0 #a2a2a6, inset -1px -1px 0 #ccc;
}

h1 {
    flex: 1;
    margin: 0;
    padding-top: 2px;
    font-size: 14px;
    text-align: center;
    color: #333;
}

.window-buttons {
    display: flex;
}

.window-buttons button {
    width: 24px;
}

/* ribbon tabs */
.tabs {
    position: relative;
    display: flex;
    align-items: flex-end;
    height: 28px;
    padding-left: 3px;
}

.tab {
    height: 24px;
    padding: 0 10px;
    font-size: 14px;
    font-weight: bold;
    color: #7b7b7d;
    background: #f0f0f2;
    border: 1px solid #d2d2d6;
    border-left: 0;
}

.tab.file {
    width: 47px;
    padding: 0;
    margin-right: 7px;
    border-left: 1px solid #d2d2d6;
}

.tab.active {
    z-index: 1;
    height: 28px;
    color: #444;
    background: #fcfcfd;
    border-left: 1px solid #d2d2d6;
    border-bottom: 0;
}

.file .caret {
    margin-left: 2px;
}

.help-buttons {
    display: flex;
    align-items: center;
    margin-left: auto;
    height: 28px;
    padding: 0 5px 2px 0;
}

.help-buttons button {
    width: 20px;
}

.help-buttons .drop {
    width: 14px;
}

/* ribbon */
.ribbon {
    display: flex;
    margin: -1px 4px 0 3px;
    border: 1px solid #cacace;
    border-top-color: #dcdce0;
}

.group {
    display: flex;
    flex-direction: column;
    flex: none;
    border-right: 1px solid #dcdce0;
}

.group-body {
    display: flex;
    height: 77px;
}

.group-name {
    height: 25px;
    display: flex;
    align-items: center;
    justify-content: center;
    white-space: nowrap;
    background: #eeeef0;
    border-top: 1px solid #d8d8dc;
}

.group-name .caret {
    margin-left: 5px;
}

.checking { width: 86px; }
.visibility { width: 122px; }
.datum { width: 212px; }
.shapes { width: 87px; }
.engineering { width: 82px; }
.editing { width: 56px; }
.intent { width: 84px; }
.tols { width: 71px; }
.measure { width: 65px; }
.display { width: 122px; }
.libraries { width: 56px; }
.tools { width: 52px; }
.aids { width: 74px; }
.help { width: 51px; }
.rest { flex: 1; border-right: 0; }

.big {
    flex: 1;
    flex-direction: column;
    justify-content: flex-start;
    padding-top: 6px;
    line-height: 16px;
}

.big svg {
    width: 28px;
    height: 28px;
    margin-bottom: 6px;
}

.big.menu svg {
    margin-bottom: 9px;
}

.big.menu .caret {
    margin-top: 4px;
}

.big span .caret {
    margin: 0 0 2px 5px;
}

.layers,
.plane,
.sketch,
.extrude,
.family,
.appearance {
    flex: none;
}

.layers { width: 48px; }
.plane { width: 44px; }
.sketch { width: 50px; }
.extrude { width: 53px; }
.family { width: 54px; margin-left: 4px; }
.appearance { width: 76px; }

.stack {
    display: flex;
    flex-direction: column;
    padding-top: 2px;
}

.stack.wide {
    flex: 1;
    min-width: 0;
}

.stack.center {
    flex: 1;
    align-items: center;
}

.stack.spread {
    padding-left: 9px;
    gap: 13px;
}

.engineering .group-body {
    padding-left: 16px;
    gap: 3px;
}

.small {
    height: 24px;
    justify-content: flex-start;
    white-space: nowrap;
}

.small svg {
    margin-right: 2px;
}

.small .caret {
    margin-left: 7px;
}

.shapes .small .caret,
.engineering .small .caret {
    margin-left: 5px;
}

.wide .small svg {
    margin-right: 1px;
}

.small:disabled {
    color: #a2a2a4;
}

.center .small svg,
.center .small .caret {
    margin: 0;
}

.libraries .small {
    height: 28px;
}

.libraries .small.tight {
    height: 14px;
}

.relations {
    font-size: 14px;
    font-weight: bold;
    color: #333;
}

/* work area */
.work {
    flex: 1;
    display: flex;
}

.navigator {
    width: 313px;
    flex: none;
    display: flex;
    flex-direction: column;
    padding: 12px 4px 11px 3px;
}

.nav-tabs {
    display: flex;
}

.nav-tabs button {
    width: 27px;
    height: 26px;
    background: #eeeef0;
    border: 1px solid #d2d2d6;
    border-width: 1px 1px 0 0;
}

.nav-tabs .active {
    background: #fcfcfd;
    border-left-width: 1px;
}

.tree {
    flex: 1;
    border: 1px solid #c8c8cc;
    border-width: 1px 2px 2px 1px;
}

.tree-head {
    display: flex;
    align-items: center;
    height: 25px;
    padding-left: 18px;
    border-bottom: 1px solid #d0d0d4;
}

.tree-head button {
    width: 22px;
}

.tree-head .drop {
    width: 15px;
}

h2 {
    flex: 1;
    margin: 0;
    font-size: 13px;
}

ul {
    list-style: none;
    margin: 0;
    padding: 0;
    font-size: 13px;
    color: #5c5c5e;
}

li {
    display: flex;
    align-items: center;
    height: 18px;
}

li svg {
    margin-right: 2px;
}

li.root {
    padding-left: 2px;
}

li i {
    width: 20px;
}

li .expand::before {
    content: "";
    display: block;
    width: 0;
    margin-left: 9px;
    border: 4px solid transparent;
    border-left: 6px solid #8a8a8a;
    border-right: 0;
}

.suppressed {
    color: #bdbdbf;
}

/* graphics area */
.viewport {
    position: relative;
    flex: 1;
    margin-right: 4px;
    background: linear-gradient(#9c9a8d, #bcbaac 45%, #e2dfd3);
}

.scene {
    position: absolute;
    width: 100%;
    height: 100%;
}

.tube {
    fill: none;
}

.datums {
    fill: none;
    stroke: #ac7c4c;
}

.view-tools {
    position: absolute;
    top: 7px;
    left: 0;
    right: 0;
    width: max-content;
    margin: 0 auto;
    display: flex;
    padding: 0 8px 0 4px;
    background: #f6f6f8;
}

.view-tools button {
    position: relative;
    width: 24px;
    height: 24px;
    background: #fff;
    border-right: 1px solid #e0e0e2;
}

.view-tools .pressed {
    background: #e6e6e8;
}

.more::after {
    content: "";
    position: absolute;
    right: 1px;
    bottom: 3px;
    border: 2px solid transparent;
    border-right-color: #333;
    border-bottom-color: #333;
}

/* status bar */
.statusbar {
    display: flex;
    align-items: center;
    height: 36px;
    padding: 0 17px 0 5px;
    background: #eeeff1;
    border-top: 2px solid #9a9a9e;
    border-bottom: 2px solid #9a9a9e;
}

.statusbar > button {
    width: 20px;
    height: 20px;
    margin: 4px 4px 0 0;
    border: 1px solid #d0d0d4;
}

.message {
    flex: 1;
    margin: 0 0 4px 3px;
    padding-left: 6px;
    border-left: 1px solid #d8d8dc;
}

.message::before {
    content: "";
    display: inline-block;
    width: 5px;
    height: 5px;
    margin: 0 5px 2px 0;
    border-radius: 50%;
    background: #1a1a9c;
}

.cell {
    width: 32px;
    height: 28px;
    border-left: 1px solid #d8d8dc;
}

.lights {
    display: flex;
    align-items: center;
    gap: 2px;
    padding-left: 4px;
}

.lights b,
.lights i {
    width: 5px;
    height: 5px;
    border-radius: 50%;
    background: #ccc;
}

.lights b {
    width: 9px;
    height: 9px;
    background: #55cc55;
}

.statusbar .find {
    width: 36px;
    height: 26px;
    margin: 0 88px 0 0;
    border: 1px solid #b8b8bc;
    border-radius: 2px;
    background: linear-gradient(#fff, #e6e6e8);
}

.filter {
    position: relative;
    width: 159px;
}

.filter::after {
    content: "";
    position: absolute;
    right: 4px;
    top: 9px;
    border: 3px solid transparent;
    border-top: 5px solid #222;
    border-bottom: 0;
}

.filter select {
    appearance: none;
    display: block;
    width: 100%;
    height: 22px;
    padding: 0 5px;
    font: inherit;
    color: #111;
    background: #fff;
    border: 1px solid #c4c4c8;
    border-radius: 0;
}

.start-orb {
    position: absolute;
    left: 6px;
    bottom: -24px;
    width: 30px;
    height: 30px;
    border: 2px solid #3d6c94;
    border-radius: 50%;
    background: #a9c4d8;
}

.watermark {
    position: absolute;
    right: 4px;
    bottom: 4px;
    width: 207px;
    height: 63px;
    display: flex;
    background: rgba(255, 255, 255, 0.35);
    color: #8fc9a0;
    pointer-events: none;
}

.watermark svg {
    width: 60px;
    height: 60px;
}

.watermark strong {
    display: block;
    margin-left: 10px;
    font: bold 29px/42px "Noto Sans CJK SC", sans-serif;
}

.watermark span {
    display: block;
    font: 15px/14px "Open Sans", sans-serif;
    color: #bfdedb;
}
```
